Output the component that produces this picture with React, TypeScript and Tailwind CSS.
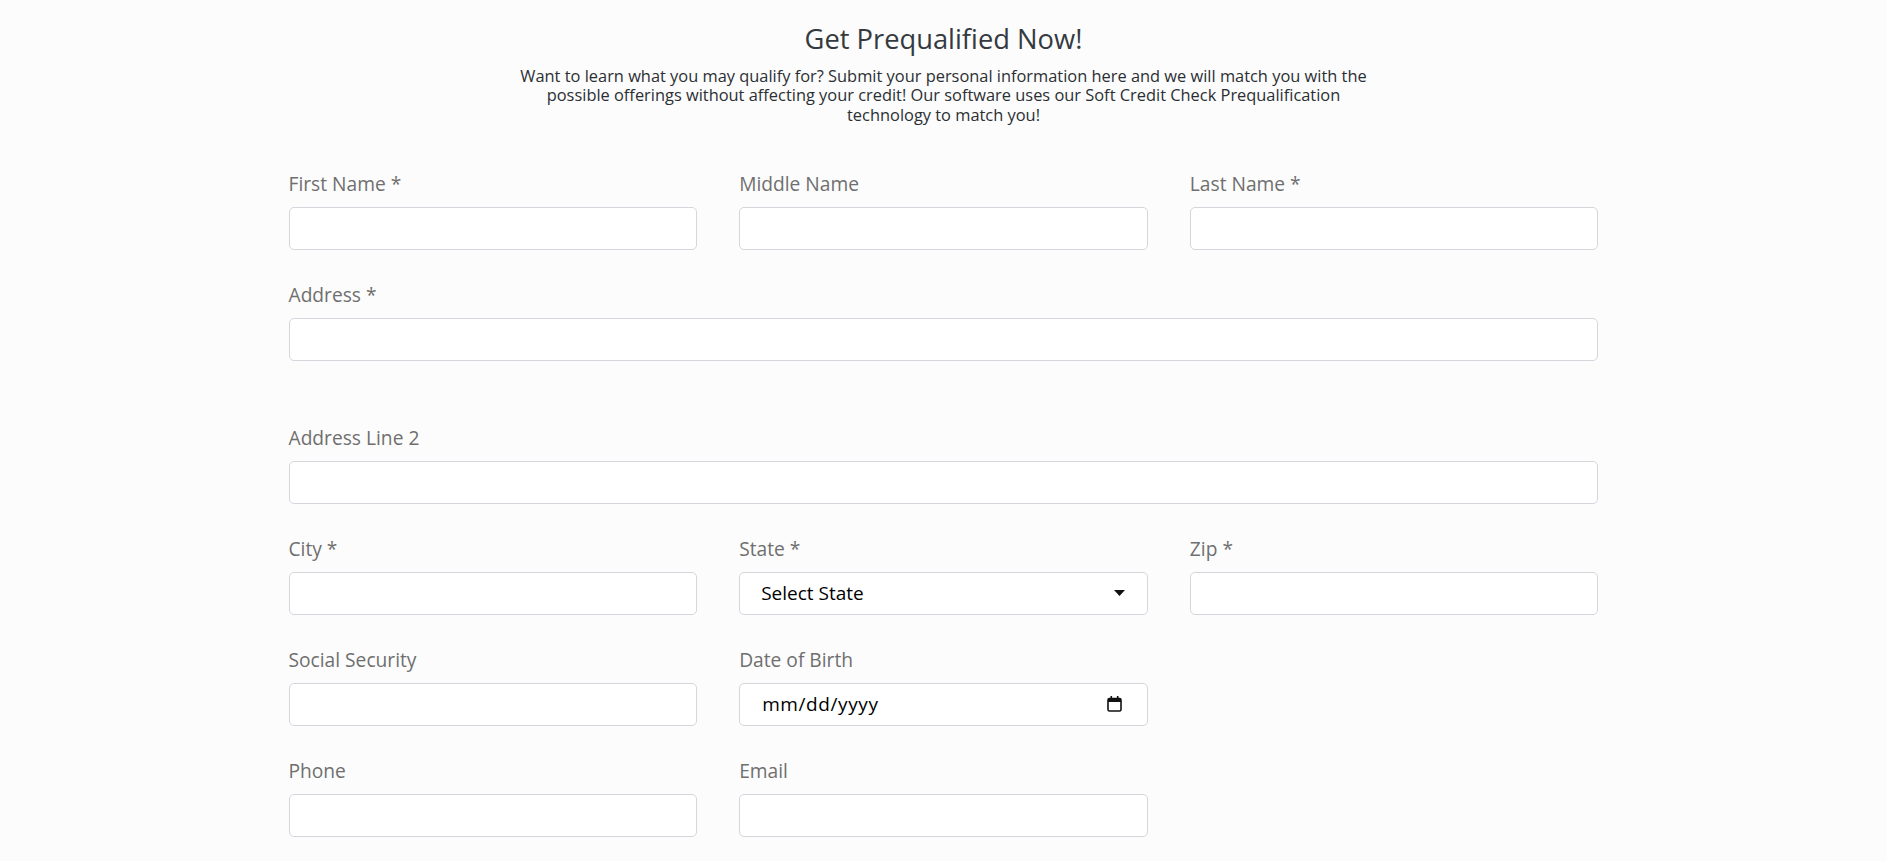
import React from "react";

const Label = ({ text }: { text: string }) => (
  <label className="block text-[19.2px] leading-[24px] text-[#6f6f6f] mb-[11px]">{text}</label>
);

const TextField = ({ label }: { label: string }) => (
  <div>
    <Label text={label} />
    <input
      type="text"
      className="block w-full h-[43px] rounded-[5px] border border-[#d3d7dc] bg-white px-[20px] text-[19px] outline-none"
    />
  </div>
);

const SelectField = ({ label, value }: { label: string; value: string }) => (
  <div>
    <Label text={label} />
    <div className="flex items-center justify-between h-[43px] rounded-[5px] border border-[#d3d7dc] bg-white pl-[21px] pr-[22px]">
      <span className="text-[19px] text-black">{value}</span>
      <svg width="11" height="6" viewBox="0 0 11 6">
        <path d="M0 0 L11 0 L5.5 6 Z" fill="#111" />
      </svg>
    </div>
  </div>
);

const DateField = ({ label }: { label: string }) => (
  <div>
    <Label text={label} />
    <div className="flex items-center justify-between h-[43px] rounded-[5px] border border-[#d3d7dc] bg-white pl-[22px] pr-[25px]">
      <span className="text-[19px] tracking-[0.6px] text-black">mm/dd/yyyy</span>
      <svg width="15" height="16" viewBox="0 0 15 16">
        <rect x="1" y="2.5" width="13" height="12.5" rx="1.5" fill="none" stroke="#111" strokeWidth="1.6" />
        <rect x="1" y="2.5" width="13" height="3.5" fill="#111" />
        <rect x="3.5" y="0" width="1.6" height="3" fill="#111" />
        <rect x="9.9" y="0" width="1.6" height="3" fill="#111" />
      </svg>
    </div>
  </div>
);

export default function App() {
  return (
    <div className="min-h-screen bg-[#fcfcfc] font-['Open_Sans',sans-serif]">
      <div className="w-[1310px] mx-auto pt-[21px] pb-[40px]">
        <h1 className="text-center text-[27.3px] leading-[36px] text-[#343a40]">Get Prequalified Now!</h1>
        <p className="mt-[9px] text-center text-[16.4px] leading-[19.3px] text-[#2b2f33]">
          Want to learn what you may qualify for? Submit your personal information here and we will match you with the
          <br />
          possible offerings without affecting your credit! Our software uses our Soft Credit Check Prequalification
          <br />
          technology to match you!
        </p>

        <div className="mt-[48px] grid grid-cols-3 gap-x-[42px] gap-y-[33px]">
          <TextField label="First Name *" />
          <TextField label="Middle Name" />
          <TextField label="Last Name *" />

          <div className="col-span-3">
            <TextField label="Address *" />
          </div>

          <div className="col-span-3 mt-[32px]">
            <TextField label="Address Line 2" />
          </div>

          <TextField label="City *" />
          <SelectField label="State *" value="Select State" />
          <TextField label="Zip *" />

          <TextField label="Social Security" />
          <DateField label="Date of Birth" />
          <div />

          <TextField label="Phone" />
          <TextField label="Email" />
          <div />
        </div>
      </div>
    </div>
  );
}
